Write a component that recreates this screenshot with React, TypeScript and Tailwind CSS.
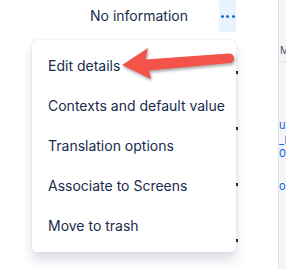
import React from "react";

const items = [
  "Edit details",
  "Contexts and default value",
  "Translation options",
  "Associate to Screens",
  "Move to trash",
];

export default function App() {
  return (
    <div
      className="flex w-[286px] h-[269px] overflow-hidden bg-white text-[#172B4D]"
      style={{ fontFamily: "Inter, 'Noto Sans', sans-serif" }}
    >
      <div className="relative flex w-[278px] h-full flex-col bg-white">
        <div className="flex h-[32px] shrink-0 items-center justify-end pr-[42px]">
          <span className="text-[14px] leading-[20px] mr-[31px]">No information</span>
          <button className="flex h-[32px] w-[17px] items-center justify-center gap-[2.5px] rounded-[3px] bg-[#E9F2FF]">
            <span className="block h-[3px] w-[3px] rounded-full bg-[#0C66E4]" />
            <span className="block h-[3px] w-[3px] rounded-full bg-[#0C66E4]" />
            <span className="block h-[3px] w-[3px] rounded-full bg-[#0C66E4]" />
          </button>
        </div>

        {/* rows behind the menu, their action marks peeking out */}
        <div className="mt-[12px] flex flex-col">
          {[0, 1, 2, 3].map((i) => (
            <div key={i} className="flex h-[56px] items-center justify-end pr-[40.5px]">
              <span className="block h-[3px] w-[1.5px] bg-[#172B4D]" />
            </div>
          ))}
        </div>

        <div className="absolute left-[32px] top-[40px] w-[204px] rounded-[4px] bg-white py-[6px] shadow-[0_8px_12px_rgba(9,30,66,0.15),0_0_1px_rgba(9,30,66,0.31)]">
          {items.map((t) => (
            <div key={t} className="flex h-[40px] items-center pl-[16px] text-[14px] leading-[20px] text-[#172B4D]">
              {t}
            </div>
          ))}
        </div>

        <svg
          className="absolute left-0 top-0 pointer-events-none"
          width="278"
          height="100"
          viewBox="0 0 278 100"
          style={{ filter: "drop-shadow(1px 2px 1.5px rgba(0,0,0,0.35))" }}
        >
          <path
            d="M122 65 L148 48 L145.5 59.5 L229 53.5 A4.8 4.8 0 0 1 229.6 63.1 L149 70.5 L151 79 Z"
            fill="#F4534A"
            strokeLinejoin="round"
          />
        </svg>
      </div>

      <div className="flex w-[8px] h-full flex-col overflow-hidden whitespace-nowrap border-l border-[#DCDFE4] bg-[#F4F5F7]">
        <div className="mt-[44px] pl-px text-[10px] leading-[12px] text-[#44546F]">M</div>
        <div className="mt-[5px] h-px w-full shrink-0 bg-[#DCDFE4]" />
        <div className="mt-[57px] flex flex-col text-[11px] leading-[12px] text-[#0C66E4]">
          <span>ur</span>
          <span className="mt-[3px]">_b</span>
          <span className="mt-px">00</span>
          <span className="mt-[21px]">oc</span>
        </div>
      </div>
    </div>
  );
}
